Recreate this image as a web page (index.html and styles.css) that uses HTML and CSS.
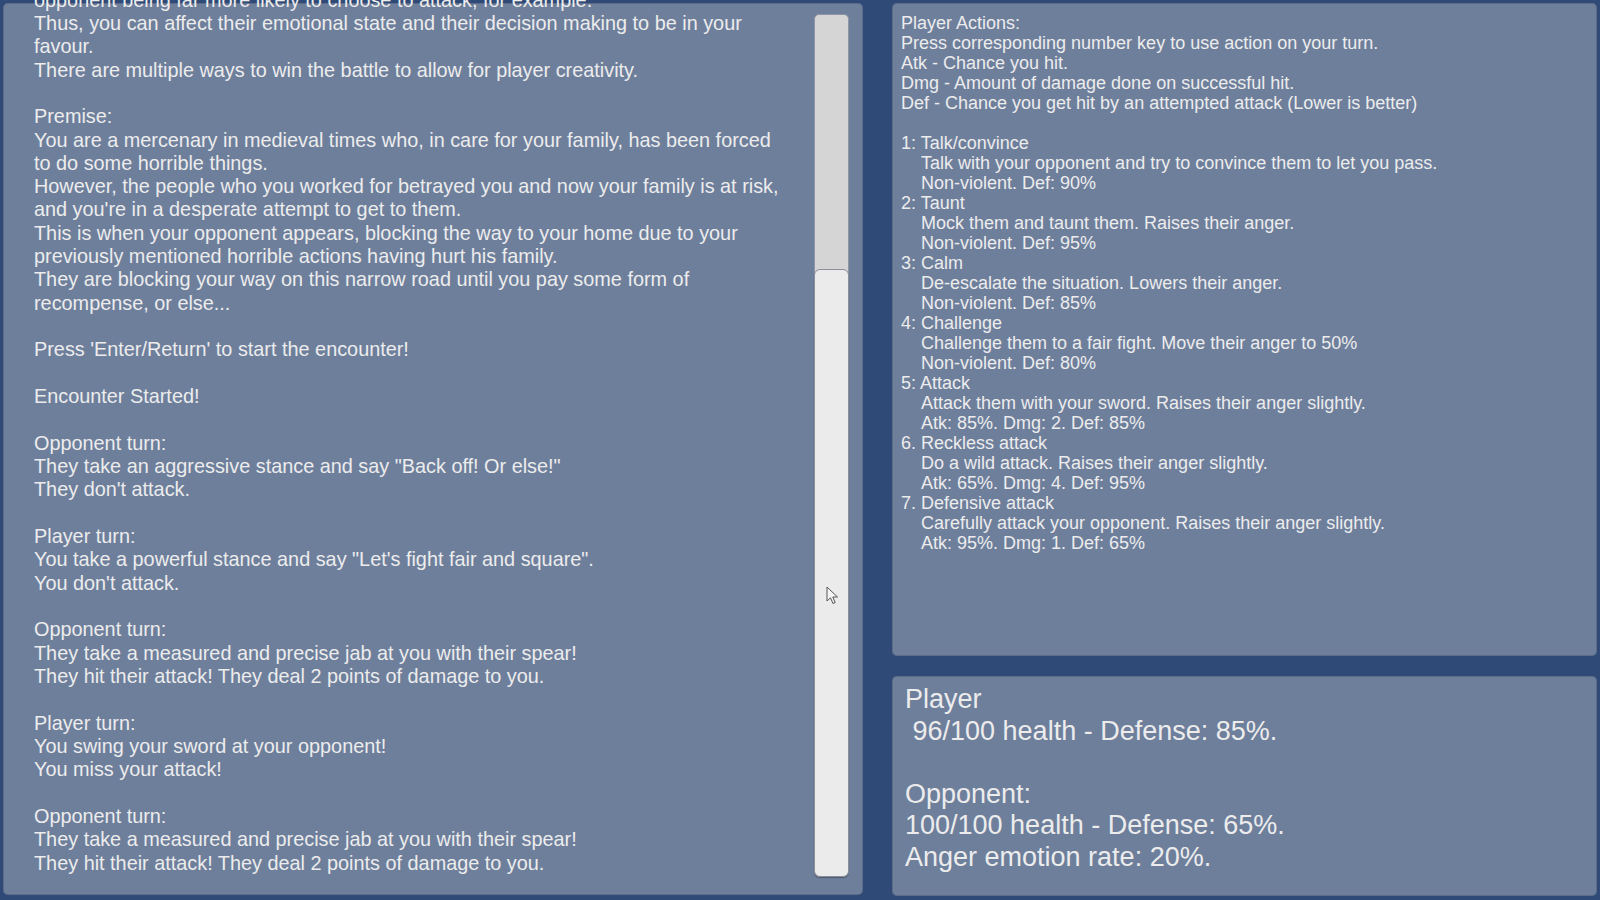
FILE: index.html
```
<!DOCTYPE html>
<html>
<head>
<meta charset="utf-8">
<link rel="stylesheet" href="styles.css">
</head>
<body>
<div class="screen">
  <div class="panel log">
    <div class="log-text">
      <div class="ln">opponent being far more likely to choose to attack, for example.</div>
      <div class="ln">Thus, you can affect their emotional state and their decision making to be in your</div>
      <div class="ln">favour.</div>
      <div class="ln">There are multiple ways to win the battle to allow for player creativity.</div>
      <div class="ln"> </div>
      <div class="ln">Premise:</div>
      <div class="ln">You are a mercenary in medieval times who, in care for your family, has been forced</div>
      <div class="ln">to do some horrible things.</div>
      <div class="ln">However, the people who you worked for betrayed you and now your family is at risk,</div>
      <div class="ln">and you're in a desperate attempt to get to them.</div>
      <div class="ln">This is when your opponent appears, blocking the way to your home due to your</div>
      <div class="ln">previously mentioned horrible actions having hurt his family.</div>
      <div class="ln">They are blocking your way on this narrow road until you pay some form of</div>
      <div class="ln">recompense, or else...</div>
      <div class="ln"> </div>
      <div class="ln">Press 'Enter/Return' to start the encounter!</div>
      <div class="ln"> </div>
      <div class="ln">Encounter Started!</div>
      <div class="ln"> </div>
      <div class="ln">Opponent turn:</div>
      <div class="ln">They take an aggressive stance and say "Back off! Or else!"</div>
      <div class="ln">They don't attack.</div>
      <div class="ln"> </div>
      <div class="ln">Player turn:</div>
      <div class="ln">You take a powerful stance and say "Let's fight fair and square".</div>
      <div class="ln">You don't attack.</div>
      <div class="ln"> </div>
      <div class="ln">Opponent turn:</div>
      <div class="ln">They take a measured and precise jab at you with their spear!</div>
      <div class="ln">They hit their attack! They deal 2 points of damage to you.</div>
      <div class="ln"> </div>
      <div class="ln">Player turn:</div>
      <div class="ln">You swing your sword at your opponent!</div>
      <div class="ln">You miss your attack!</div>
      <div class="ln"> </div>
      <div class="ln">Opponent turn:</div>
      <div class="ln">They take a measured and precise jab at you with their spear!</div>
      <div class="ln">They hit their attack! They deal 2 points of damage to you.</div>
    </div>
    <div class="scrollbar">
      <div class="thumb"></div>
    </div>
    <svg class="cursor" width="13" height="19" viewBox="0 0 13 19">
      <path d="M1 1 L1 15 L4.5 11.8 L7 17.5 L9.2 16.5 L6.8 11 L11.5 11 Z" fill="#f4f4f4" stroke="#555" stroke-width="1" stroke-linejoin="round"/>
    </svg>
  </div>
  <div class="side">
    <div class="panel actions">
      <div class="ln">Player Actions:</div>
      <div class="ln">Press corresponding number key to use action on your turn.</div>
      <div class="ln">Atk - Chance you hit.</div>
      <div class="ln">Dmg - Amount of damage done on successful hit.</div>
      <div class="ln">Def - Chance you get hit by an attempted attack (Lower is better)</div>
      <div class="ln"> </div>
      <div class="ln">1: Talk/convince</div>
      <div class="ln sub">Talk with your opponent and try to convince them to let you pass.</div>
      <div class="ln sub">Non-violent. Def: 90%</div>
      <div class="ln">2: Taunt</div>
      <div class="ln sub">Mock them and taunt them. Raises their anger.</div>
      <div class="ln sub">Non-violent. Def: 95%</div>
      <div class="ln">3: Calm</div>
      <div class="ln sub">De-escalate the situation. Lowers their anger.</div>
      <div class="ln sub">Non-violent. Def: 85%</div>
      <div class="ln">4: Challenge</div>
      <div class="ln sub">Challenge them to a fair fight. Move their anger to 50%</div>
      <div class="ln sub">Non-violent. Def: 80%</div>
      <div class="ln">5: Attack</div>
      <div class="ln sub">Attack them with your sword. Raises their anger slightly.</div>
      <div class="ln sub">Atk: 85%. Dmg: 2. Def: 85%</div>
      <div class="ln">6. Reckless attack</div>
      <div class="ln sub">Do a wild attack. Raises their anger slightly.</div>
      <div class="ln sub">Atk: 65%. Dmg: 4. Def: 95%</div>
      <div class="ln">7. Defensive attack</div>
      <div class="ln sub">Carefully attack your opponent. Raises their anger slightly.</div>
      <div class="ln sub">Atk: 95%. Dmg: 1. Def: 65%</div>
    </div>
    <div class="panel status">
      <div class="ln">Player</div>
      <div class="ln"> 96/100 health - Defense: 85%.</div>
      <div class="ln"> </div>
      <div class="ln">Opponent:</div>
      <div class="ln">100/100 health - Defense: 65%.</div>
      <div class="ln">Anger emotion rate: 20%.</div>
    </div>
  </div>
</div>
</body>
</html>
```
FILE: styles.css
```
html, body {
  margin: 0;
  padding: 0;
  width: 1600px;
  height: 900px;
  overflow: hidden;
  background: #2f4a76;
}

.screen {
  display: grid;
  grid-template-columns: 860px 705px;
  column-gap: 29px;
  padding: 3px 3px 4px 3px;
  height: 893px;
  font-family: "Liberation Sans", Arial, sans-serif;
  color: #ececec;
}

.panel {
  background: #6e7f9c;
  border-radius: 5px;
  box-shadow: inset 0 0 0 1px rgba(60, 75, 100, 0.35);
}

.ln {
  white-space: pre;
}

.log {
  position: relative;
  display: flex;
  flex-direction: column;
  justify-content: flex-end;
  padding: 0 0 20px 31px;
  height: 892px;
  box-sizing: border-box;
}

.log-text {
  font-size: 19.85px;
  line-height: 23.33px;
}

.scrollbar {
  position: absolute;
  top: 11px;
  right: 14px;
  width: 35px;
  height: 863px;
  box-sizing: border-box;
  background: #d5d5d5;
  border: 1px solid #8f96a3;
  border-radius: 5px;
  display: flex;
  flex-direction: column;
  justify-content: flex-end;
}

.thumb {
  height: 606px;
  background: #ebebeb;
  border-radius: 6px;
  border: 1px solid #8a8f99;
  margin: -1px;
  box-shadow: 0 1px 1px rgba(40, 50, 70, 0.5);
}

.cursor {
  position: absolute;
  left: 823px;
  top: 583px;
}

.side {
  display: flex;
  flex-direction: column;
  gap: 20px;
}

.actions {
  height: 653px;
  box-sizing: border-box;
  padding: 10.4px 9px 0 9px;
  font-size: 18px;
  line-height: 20px;
}

.actions .sub {
  padding-left: 20px;
}

.status {
  height: 220px;
  box-sizing: border-box;
  padding: 8px 13px 0 13px;
  font-size: 27px;
  line-height: 31.6px;
}
```
